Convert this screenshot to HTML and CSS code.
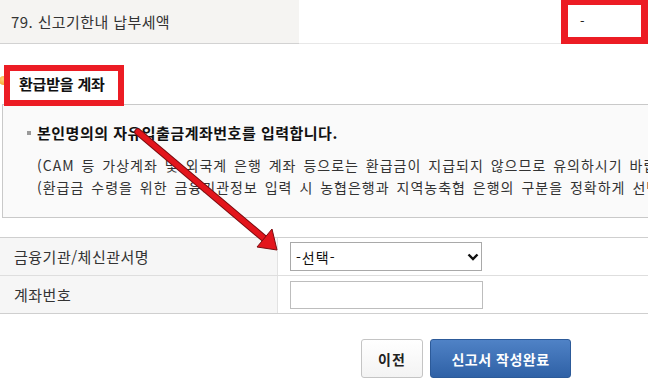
FILE: index.html
```html
<!DOCTYPE html>
<html lang="ko">
<head>
<meta charset="utf-8">
<title>환급받을 계좌</title>
<link rel="stylesheet" href="styles.css">
</head>
<body>
<div class="page">
  <div class="row-top">
    <div class="cell-label">79. 신고기한내 납부세액</div>
    <div class="cell-value"></div>
  </div>
  <div class="hl hl-amount"><span class="amount">-</span></div>

  <div class="section-title">
    <span class="dot"></span>
    <h3>환급받을 계좌</h3>
  </div>
  <div class="hl hl-title"></div>

  <div class="notice">
    <p class="notice-main"><span class="sq"></span>본인명의의 자유입출금계좌번호를 입력합니다.</p>
    <p class="notice-sub">(CAM 등 가상계좌 및 외국계 은행 계좌 등으로는 환급금이 지급되지 않으므로 유의하시기 바랍니다.)</p>
    <p class="notice-sub">(환급금 수령을 위한 금융기관정보 입력 시 농협은행과 지역농축협 은행의 구분을 정확하게 선택하시기 바랍니다.)</p>
  </div>

  <div class="form">
    <div class="form-row">
      <div class="form-label">금융기관/체신관서명</div>
      <div class="form-field">
        <span class="select-wrap">
          <select class="select"><option>-선택-</option></select>
          <svg class="chev" width="12" height="8" viewBox="0 0 12 8"><path d="M1.5 1.5 L6 6 L10.5 1.5" fill="none" stroke="#111" stroke-width="2.4"/></svg>
        </span>
      </div>
    </div>
    <div class="form-row">
      <div class="form-label">계좌번호</div>
      <div class="form-field"><input class="text-input" type="text"></div>
    </div>
  </div>

  <div class="actions">
    <button class="btn btn-prev">이전</button>
    <button class="btn btn-submit">신고서 작성완료</button>
  </div>

  <svg class="arrow" width="648" height="387" viewBox="0 0 648 387">
    <line x1="138" y1="132" x2="266" y2="240" stroke="#7a0c10" stroke-width="7.5" stroke-linecap="round"/>
    <line x1="138" y1="132" x2="266" y2="240" stroke="#e3151c" stroke-width="5.5" stroke-linecap="round"/>
    <polygon points="277,250 257,247 272,229" fill="#e3151c" stroke="#7a0c10" stroke-width="1"/>
  </svg>
</div>
</body>
</html>
```

FILE: styles.css
```css
html, body {
  margin: 0;
  padding: 0;
  overflow: hidden;
  background: #fff;
}
body {
  font-family: "Noto Sans CJK KR", "Noto Sans", sans-serif;
  color: #333;
}
.page {
  position: relative;
  width: 932px;
  height: 387px;
}
.row-top {
  display: flex;
  height: 44px;
}
.cell-label {
  width: 299px;
  box-sizing: border-box;
  background: #f5f4f2;
  border-bottom: 1px solid #d2d2d2;
  padding-left: 11px;
  font-size: 15px;
  letter-spacing: 0.4px;
  line-height: 43px;
  color: #333;
}
.cell-value {
  flex: 1;
  border-bottom: 1px solid #e8e8e8;
}
.hl {
  position: absolute;
  box-sizing: border-box;
  border: 7px solid #ec1c24;
  background: #fff;
}
.hl-amount {
  left: 561px;
  top: -2px;
  width: 87px;
  height: 46px;
  font-size: 13px;
  line-height: 31px;
  padding-left: 12px;
  color: #222;
}
.hl-title {
  left: 4px;
  top: 65px;
  width: 120px;
  height: 41px;
  border-width: 6px;
  background: transparent;
}
.section-title {
  display: flex;
  align-items: center;
  height: 60px;
  padding-top: 18px;
  box-sizing: border-box;
}
.dot {
  width: 9px;
  height: 9px;
  border-radius: 50%;
  background: radial-gradient(circle at 40% 35%, #ffd27a, #f39a1c);
  margin-left: -1px;
  margin-bottom: 6px;
}
.section-title h3 {
  margin: 0 0 0 11px;
  font-size: 15px;
  font-weight: 700;
  color: #111;
  letter-spacing: -0.2px;
}
.notice {
  margin-left: 2px;
  background: #fafafa;
  border: 1px solid #c9c9c9;
  padding: 17px 0 19px 24px;
  white-space: nowrap;
}
.notice p {
  margin: 0;
  line-height: 22px;
}
.notice-main {
  display: flex;
  align-items: center;
  font-size: 15px;
  font-weight: 700;
  color: #111;
  letter-spacing: 0.5px;
  margin-bottom: 10px !important;
}
.sq {
  width: 4px;
  height: 4px;
  background: #9a9a9a;
  margin-right: 6px;
}
.notice-sub {
  padding-left: 10px;
  font-size: 14px;
  letter-spacing: 1px;
  word-spacing: 2px;
  color: #333;
}
.form {
  margin-top: 19px;
  border-top: 1px solid #cfcfcf;
}
.form-row {
  display: grid;
  grid-template-columns: 278px 1fr;
  height: 38px;
  box-sizing: border-box;
  border-bottom: 1px solid #dedede;
}
.form-row:last-child {
  border-bottom-color: #cfcfcf;
}
.form-label {
  background: #f6f6f6;
  border-right: 1px solid #e2e2e2;
  padding-left: 14px;
  font-size: 15px;
  letter-spacing: 0.5px;
  line-height: 37px;
  color: #333;
}
.form-field {
  display: flex;
  align-items: center;
  padding-left: 12px;
}
.select-wrap {
  position: relative;
  display: inline-block;
  height: 29px;
}
.select {
  appearance: none;
  -webkit-appearance: none;
  width: 192px;
  height: 29px;
  border: 1px solid #a9a9a9;
  border-radius: 0;
  background: #fff;
  font-family: "Noto Sans CJK KR", sans-serif;
  font-size: 14px;
  letter-spacing: 1px;
  color: #111;
  padding: 0 0 0 5px;
  margin: 0;
  display: block;
}
.chev {
  position: absolute;
  right: 3px;
  top: 11px;
}
.text-input {
  width: 193px;
  height: 28px;
  box-sizing: border-box;
  border: 1px solid #bdbdbd;
  margin: 0;
  padding: 0 4px;
}
.actions {
  display: flex;
  justify-content: center;
  gap: 7px;
  margin-top: 25px;
}
.btn {
  height: 39px;
  border-radius: 3px;
  font-family: "Noto Sans CJK KR", sans-serif;
  font-size: 14px;
  font-weight: 700;
  padding: 0;
  margin: 0;
}
.btn-prev {
  width: 62px;
  background: linear-gradient(#ffffff, #f3f3f3);
  border: 1px solid #c4c4c4;
  color: #222;
  letter-spacing: 1px;
}
.btn-submit {
  width: 141px;
  background: linear-gradient(#4f82c6, #2f61a6);
  border: 1px solid #2c5a99;
  color: #fff;
  letter-spacing: 0.5px;
}
.arrow {
  position: absolute;
  left: 0;
  top: 0;
  pointer-events: none;
}
```
